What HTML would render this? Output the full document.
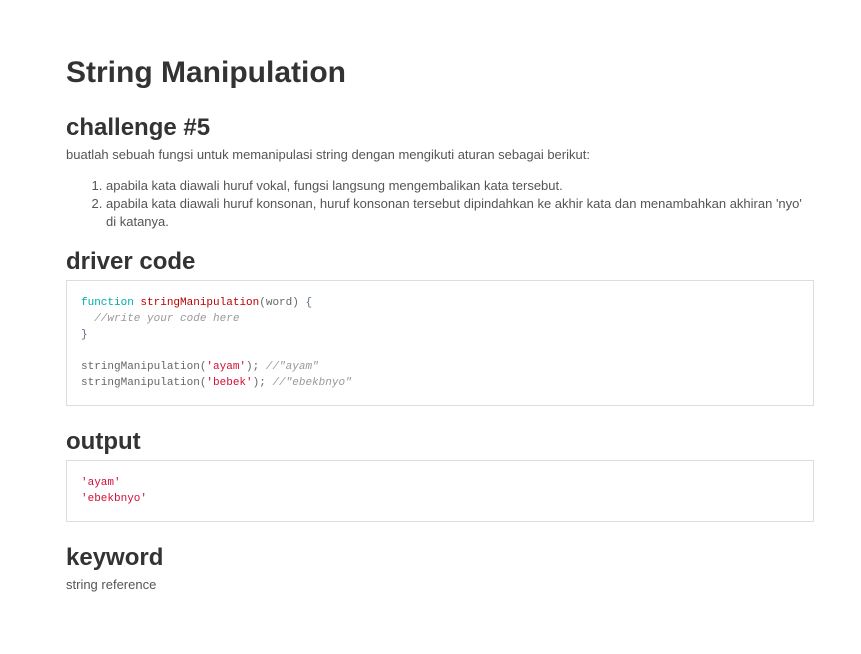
<!DOCTYPE html>
<html><head><meta charset="utf-8"><style>
body{margin:0;background:#fff;font-family:"Liberation Sans",sans-serif;color:#333;}
h1{position:absolute;left:66px;top:55px;margin:0;font-size:30px;font-weight:bold;color:#333;line-height:36px}
h2{position:absolute;left:66px;margin:0;font-size:24px;font-weight:bold;color:#333;line-height:28px}
p{position:absolute;left:66px;margin:0;font-size:13px;color:#555;line-height:18px}
ol{position:absolute;left:66px;margin:0;padding-left:40px;width:708px;font-size:13px;color:#555;line-height:18px}
pre{position:absolute;left:66px;margin:0;width:718px;padding:14px 14px;border:1px solid #ddd;font-family:"Liberation Mono",monospace;font-size:11px;line-height:16px;color:#666;}
.k{color:#0aa}.f{color:#b00}.c{color:#999;font-style:italic}.s{color:#d0103a}.p{color:#5a6e8a}
</style></head><body>
<h1>String Manipulation</h1>
<h2 style="top:114px">challenge #5</h2>
<p style="top:146px">buatlah sebuah fungsi untuk memanipulasi string dengan mengikuti aturan sebagai berikut:</p>
<ol style="top:177px"><li>apabila kata diawali huruf vokal, fungsi langsung mengembalikan kata tersebut.</li><li>apabila kata diawali huruf konsonan, huruf konsonan tersebut dipindahkan ke akhir kata dan menambahkan akhiran 'nyo' di katanya.</li></ol>
<h2 style="top:248px">driver code</h2>
<pre style="top:280px;height:96px"><span class="k">function</span> <span class="f">stringManipulation</span>(word) <span class="p">{</span>
  <span class="c">//write your code here</span>
<span class="p">}</span>

stringManipulation(<span class="s">'ayam'</span>); <span class="c">//"ayam"</span>
stringManipulation(<span class="s">'bebek'</span>); <span class="c">//"ebekbnyo"</span></pre>
<h2 style="top:428px">output</h2>
<pre style="top:460px;height:32px"><span class="s">'ayam'</span>
<span class="s">'ebekbnyo'</span></pre>
<h2 style="top:544px">keyword</h2>
<p style="top:576px">string reference</p>
</body></html>
